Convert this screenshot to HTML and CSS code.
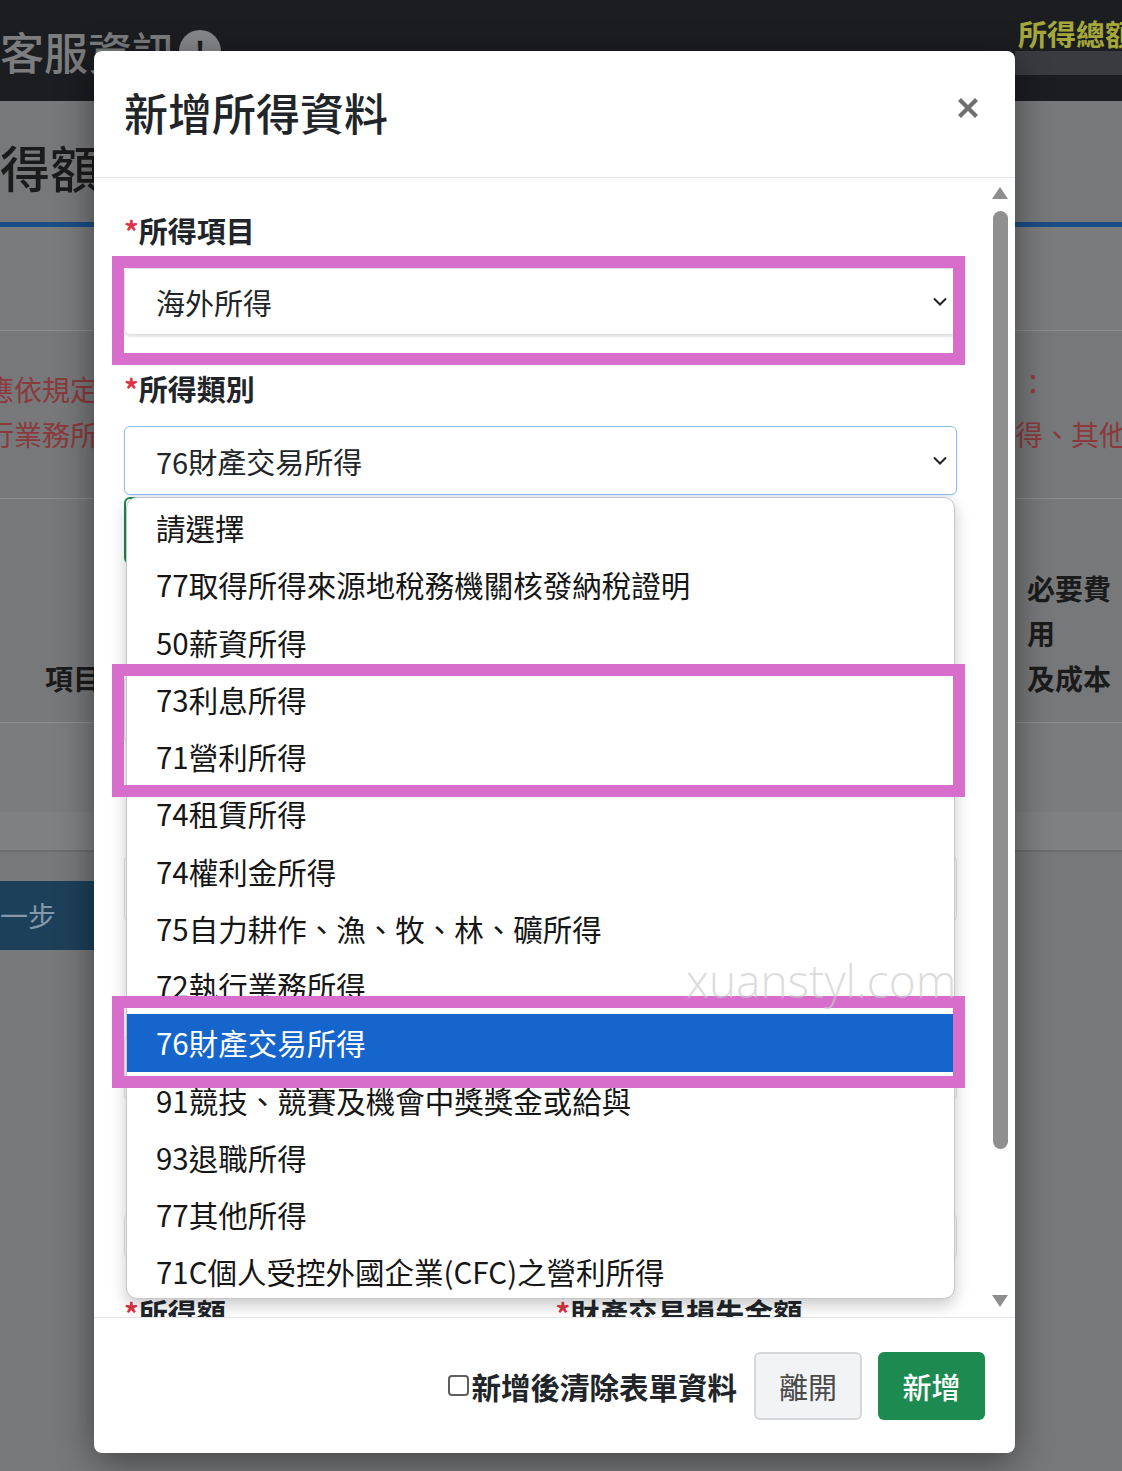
FILE: index.html
```html
<!DOCTYPE html>
<html lang="zh-Hant">

<head>
 <meta charset="UTF-8">
 <meta name="viewport" content="width=device-width, initial-scale=1.0">
 <title>新增所得資料</title>
 <link rel="stylesheet" href="styles.css">
</head>

<body>
   <!-- page under the dimmed backdrop -->
   <div id="page">
      <div class="topbar">
         <div class="brand">客服資訊<span class="info_dot">!</span></div>
         <div class="total">
            <span class="total_label">所得總額</span>
            <span class="total_bar"></span>
         </div>
      </div>
      <div class="page_title"><span>所得額試算</span></div>
      <div class="rule_blue"></div>
      <div class="band"></div>
      <div class="notice">
         <div class="side_l"><span>應依規定辦理</span><span>行業務所得</span></div>
         <div class="side_r"><span>：</span><span>得、其他所得</span></div>
      </div>
      <div class="thead">
         <div class="side_l"><span class="th_item">項目</span></div>
         <div class="side_r"><span>必要費</span><span>用</span><span>及成本</span></div>
      </div>
      <div class="row_shade"><div class="row_shade_band"></div></div>
      <div class="actions">
         <span class="btn_next">下一步</span>
      </div>
   </div>

   <div class="modal">
      <div class="modal_header">
         <h5 class="modal_title">新增所得資料</h5>
         <button class="btn_close">
            <svg width="22" height="22" viewBox="0 0 22 22"><path d="M2.5 2.5 L19.5 19.5 M19.5 2.5 L2.5 19.5" stroke="#6f6f6f" stroke-width="4.2"/></svg>
         </button>
      </div>

      <div class="modal_body">
         <div class="form_scroll">
            <div class="form_group">
               <label><span class="req">*</span>所得項目</label>
               <div class="select">
                  <span>海外所得</span>
                  <svg width="14" height="9" viewBox="0 0 14 9"><polyline points="1,1.5 7,7.5 13,1.5" fill="none" stroke="#222" stroke-width="2"/></svg>
               </div>
            </div>

            <div class="form_group has_list">
               <label><span class="req">*</span>所得類別</label>
               <div class="select is_focus">
                  <span>76財產交易所得</span>
                  <svg width="14" height="9" viewBox="0 0 14 9"><polyline points="1,1.5 7,7.5 13,1.5" fill="none" stroke="#222" stroke-width="2"/></svg>
               </div>
               <ul class="option_list">
                  <li>請選擇</li>
                  <li>77取得所得來源地稅務機關核發納稅證明</li>
                  <li>50薪資所得</li>
                  <li>73利息所得</li>
                  <li>71營利所得</li>
                  <li>74租賃所得</li>
                  <li>74權利金所得</li>
                  <li>75自力耕作、漁、牧、林、礦所得</li>
                  <li>72執行業務所得</li>
                  <li class="active">76財產交易所得</li>
                  <li>91競技、競賽及機會中獎獎金或給與</li>
                  <li>93退職所得</li>
                  <li>77其他所得</li>
                  <li>71C個人受控外國企業(CFC)之營利所得</li>
               </ul>
            </div>

            <!-- fields that sit under the open list -->
            <div class="form_stack">
               <div class="input input_green"></div>
               <div class="input"></div>
               <div class="input"></div>
               <div class="input"></div>
               <div class="input input_short"></div>
            </div>

            <div class="form_split">
               <div class="form_group">
                  <label><span class="req">*</span>所得額</label>
                  <div class="input"></div>
               </div>
               <div class="form_group">
                  <label><span class="req">*</span>財產交易損失金額</label>
                  <div class="input"></div>
               </div>
            </div>

            <!-- marker boxes around the picked fields -->
            <div class="mark mark_item"></div>
            <div class="mark mark_pair"></div>
            <div class="mark mark_active"></div>
            <div class="watermark">xuanstyl.com</div>
         </div>

         <div class="scrollbar">
            <span class="sb_up"></span>
            <span class="sb_thumb"></span>
            <span class="sb_space"></span>
            <span class="sb_down"></span>
         </div>
      </div>

      <div class="modal_footer">
         <label class="check_label"><input type="checkbox">新增後清除表單資料</label>
         <button class="btn btn_light">離開</button>
         <button class="btn btn_success">新增</button>
      </div>
   </div>
</body>

</html>
```

FILE: styles.css
```css
* { box-sizing: border-box; }
html, body { margin: 0; padding: 0; }
body { width: 1122px; height: 1471px; overflow: hidden; position: relative; background: #77787a; font-family: "Noto Sans CJK TC", "Noto Sans", sans-serif; }

/* dimmed page behind the dialog */
#page { width: 1122px; }
.topbar { height: 101px; background: #1c1d21; display: flex; justify-content: space-between; }
.brand { display: flex; align-items: center; font-size: 44px; line-height: 1; color: #7c7d7f; font-weight: 500; white-space: nowrap; }
.info_dot { width: 42px; height: 42px; border-radius: 50%; background: #88898b; color: #1c1d21; font-size: 30px; font-weight: 700; display: flex; justify-content: center; align-items: center; margin-left: 3px; }
.total { width: 107px; display: flex; flex-direction: column; overflow: hidden; }
.total_label { font-size: 29px; line-height: 1; font-weight: 700; color: #a4a73b; padding: 19px 0 0 3px; white-space: nowrap; }
.total_bar { height: 24px; margin-top: 3px; background: #393b40; }

.page_title { height: 121px; padding-top: 40px; font-size: 50px; line-height: 50px; font-weight: 500; color: #1b1b1c; white-space: nowrap; overflow: hidden; }
.page_title span { margin-left: -50px; }
.rule_blue { height: 5px; background: #1b4d86; }
.band { height: 104px; border-bottom: 1px solid #8b8c8e; background: #7a7b7d; }

.notice { height: 168px; border-bottom: 1px solid #8b8c8e; display: flex; justify-content: space-between; padding-top: 36px; font-size: 28px; line-height: 45px; color: #8a3a3c; }
.side_l { width: 94px; overflow: hidden; white-space: nowrap; display: flex; flex-direction: column; }
.notice .side_l span { margin-left: -14px; }
.side_r { width: 107px; overflow: hidden; white-space: nowrap; display: flex; flex-direction: column; }
.notice .side_r span:first-child { padding-left: 4px; margin-top: -6px; margin-bottom: 6px; }

.thead { height: 224px; border-bottom: 1px solid #8d8e90; display: flex; justify-content: space-between; align-items: flex-end; padding-bottom: 21px; font-size: 28px; line-height: 45px; font-weight: 700; color: #1b1b1b; }
.th_item { padding-left: 45px; }
.thead .side_r { padding-left: 12px; }

.row_shade { height: 129px; background: #7b7c7e; border-bottom: 2px solid #6c6d6f; display: flex; flex-direction: column; justify-content: flex-end; }
.row_shade_band { height: 38px; background: #7f8082; }

.actions { padding-top: 29px; }
.btn_next { display: inline-block; height: 69px; line-height: 69px; margin-left: -60px; padding: 0 60px 0 32px; background: #1d405a; color: #8398a9; font-size: 28px; }

/* dialog */
.modal { position: absolute; left: 94px; top: 51px; width: 921px; height: 1402px; background: #fff; border-radius: 8px; box-shadow: 0 8px 36px rgba(0,0,0,.45); display: flex; flex-direction: column; overflow: hidden; }
.modal_header { height: 127px; flex: none; border-bottom: 1px solid #e3e5e8; display: flex; justify-content: space-between; align-items: center; padding: 0 36px 0 30px; }
.modal_title { margin: 0; font-size: 44px; font-weight: 500; color: #212529; line-height: 1.2; margin-top: -4px; }
.btn_close { border: 0; background: none; padding: 0; width: 22px; height: 22px; display: flex; margin-top: -12px; }

.modal_body { flex: 1; min-height: 0; display: flex; }
.form_scroll { flex: 1; position: relative; overflow: hidden; padding: 32px 28px 0 30px; }
.form_group { position: relative; }
.form_group + .form_group { margin-top: 33px; }
.form_group label { display: block; font-size: 29px; line-height: 40px; font-weight: 700; color: #212529; margin-bottom: 18px; white-space: nowrap; }
.req { color: #dc3545; }

.select { height: 67px; border: 1px solid #dee2e6; border-radius: 6px; padding: 0 9px 0 31px; display: flex; justify-content: space-between; align-items: center; font-size: 29px; color: #212529; background: #fff; box-shadow: 0 2px 2px rgba(0,0,0,.1); }
.select.is_focus { height: 69px; border-color: #93bdee; box-shadow: 0 1px 3px rgba(13,110,253,.15); }
.input { height: 67px; border: 1px solid #dee2e6; border-radius: 6px; }
.form_stack { display: flex; flex-direction: column; gap: 112px; padding-top: 2px; }
.input_green { width: 340px; border-color: #1d8a50; border-width: 2px; }
.input_short { height: 46px; }
.form_split { display: grid; grid-template-columns: 1fr 1fr; column-gap: 30px; margin-top: 33px; }
.form_split .form_group + .form_group { margin-top: 0; }

.option_list { position: absolute; z-index: 2; top: calc(100% + 2px); left: 2px; right: 2px; margin: 0; padding: 1px 0 0; list-style: none; height: 802px; background: #fff; border: 1px solid #c6c6c6; border-radius: 11px; box-shadow: 0 6px 16px rgba(0,0,0,.22); overflow: hidden; }
.option_list li { height: 57.25px; line-height: 57.25px; padding-left: 29px; font-size: 29.5px; color: #161616; white-space: nowrap; }
.option_list li.active { background: #1565cc; color: #fff; }

.mark { position: absolute; z-index: 3; left: 18px; width: 853px; border: 12px solid #d76ecb; }
.mark_item { top: 78px; height: 109px; }
.mark_pair { top: 486px; height: 133px; }
.mark_active { top: 818px; height: 92px; }
.watermark { position: absolute; z-index: 4; left: 592px; top: 779px; font-family: "Open Sans", sans-serif; font-weight: 300; font-size: 46px; line-height: 1; color: rgba(200,200,200,.65); }

.scrollbar { width: 30px; flex: none; display: flex; flex-direction: column; align-items: center; padding: 9px 0 10px; }
.sb_up { width: 0; height: 0; border-left: 8px solid transparent; border-right: 8px solid transparent; border-bottom: 12px solid #8e8e8e; }
.sb_thumb { width: 15px; height: 938px; margin-top: 12px; border-radius: 8px; background: #8f8f8f; }
.sb_space { flex: 1; }
.sb_down { width: 0; height: 0; border-left: 8px solid transparent; border-right: 8px solid transparent; border-top: 12px solid #8e8e8e; }

.modal_footer { height: 136px; flex: none; border-top: 1px solid #e3e5e8; display: flex; justify-content: flex-end; align-items: center; padding-right: 30px; }
.check_label { display: flex; align-items: center; font-size: 29.5px; font-weight: 700; color: #212529; margin-right: 17px; }
.check_label input { appearance: none; width: 21px; height: 21px; margin: 0 2px 0 0; border: 2px solid #5f5f5f; border-radius: 4px; background: #fff; }
.btn { height: 68px; border-radius: 6px; font-family: inherit; font-size: 29px; padding: 0 23px; }
.btn_light { background: #f2f3f4; border: 2px solid #d5d7da; color: #4a4a4a; margin-right: 16px; }
.btn_success { background: #1d8a50; border: 0; color: #fff; width: 107px; font-weight: 500; }
```
